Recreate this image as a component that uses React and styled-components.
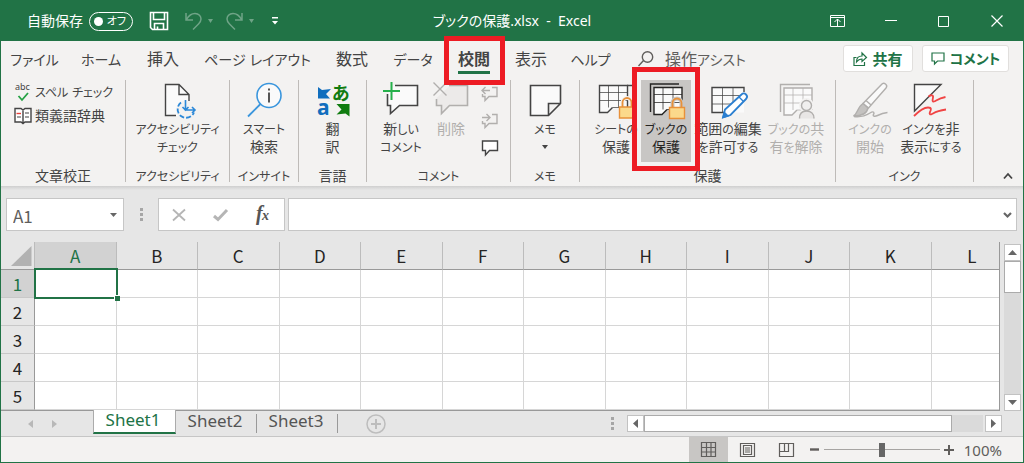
import React from "react";
import styled, { createGlobalStyle, css } from "styled-components";

const GREEN = "#217346";
const INK = "#444444";
const FAINT = "#b1afad";
const RED = "#ed1c24";

const GlobalStyle = createGlobalStyle`
  *, *::before, *::after { box-sizing: border-box; }
  body { margin: 0; background: #e6e6e6; }
  body, button, input {
    font-family: "Noto Sans", "Noto Sans CJK JP", sans-serif;
    font-feature-settings: "palt";
  }
  button { border: 0; padding: 0; background: none; color: inherit; font-size: inherit; line-height: inherit; }
  svg { display: block; flex: none; }
`;

const Window = styled.div`
  --kana: 12px;
  display: flex;
  flex-direction: column;
  min-height: 100vh;
  border: 1px solid ${GREEN};
  background: #e6e6e6;
  color: ${INK};
  overflow: hidden;
`;

const KanaRun = styled.span`
  font-size: var(--kana);
  line-height: 1;
`;

/* Title bar */
const TitleBar = styled.header`
  display: grid;
  grid-template-columns: 1fr auto 1fr;
  align-items: center;
  height: 40px;
  background: ${GREEN};
  color: #fff;
  font-size: 14px;
  line-height: 20px;
`;
const QuickAccess = styled.div`
  display: flex;
  align-items: center;
  padding-left: 26px;
`;
const Switch = styled.label`
  display: flex;
  align-items: center;
  gap: 6px;
`;
const SwitchTrack = styled.span`
  position: relative;
  display: flex;
  align-items: center;
  justify-content: flex-end;
  width: 44px;
  height: 19px;
  padding-right: 6px;
  border: 1px solid #fff;
  border-radius: 10px;
  font-size: 11px;
  line-height: 16px;
`;
const SwitchInput = styled.input`
  position: absolute;
  left: 4px;
  top: 4px;
  width: 9px;
  height: 9px;
  margin: 0;
  appearance: none;
  border-radius: 50%;
  background: #fff;
`;
const QuickButton = styled.button`
  display: flex;
  align-items: center;
  justify-content: space-between;
  width: ${(p) => p.$w}px;
  height: 24px;
  margin-left: ${(p) => p.$gap}px;
  opacity: ${(p) => (p.disabled ? 0.35 : 1)};
`;
const WindowTitle = styled.h1`
  margin: 0;
  font-size: 14px;
  font-weight: 400;
  white-space: pre;
`;
const WindowButtons = styled.div`
  display: flex;
  justify-content: flex-end;
`;
const WindowButton = styled.button`
  display: grid;
  place-items: center;
  width: 53px;
  height: 40px;
`;

/* Tab strip */
const TabStrip = styled.nav`
  --kana: 14px;
  display: flex;
  align-items: center;
  height: 35px;
  background: #f3f2f1;
  font-size: 16px;
  line-height: 24px;
  white-space: nowrap;
`;
const outlined = css`
  &::after {
    content: "";
    position: absolute;
    inset: ${(p) => p.$inset};
    z-index: 2;
    border: 5px solid ${RED};
    pointer-events: none;
  }
`;
const Tab = styled.button`
  position: relative;
  width: ${(p) => p.$w}px;
  height: 35px;
  ${(p) =>
    p.$active &&
    css`
      font-weight: 700;
      &::before {
        content: "";
        position: absolute;
        left: 13px;
        right: 13px;
        bottom: 2px;
        height: 3px;
        background: ${GREEN};
      }
      ${outlined}
    `}
`;
const Tell = styled.button`
  display: flex;
  align-items: center;
  gap: 11px;
  margin-left: 16px;
  color: #605e5c;
`;
const TabActions = styled.div`
  --kana: 14px;
  display: flex;
  gap: 9px;
  margin-left: auto;
  padding-right: 14px;
`;
const ActionButton = styled.button`
  display: flex;
  align-items: center;
  justify-content: center;
  gap: 5px;
  width: ${(p) => p.$w}px;
  height: 27px;
  border: 1px solid #e1dfdd;
  border-radius: 3px;
  background: #fff;
  color: ${GREEN};
  font-size: 15px;
  font-weight: 700;
`;

/* Ribbon */
const Ribbon = styled.section`
  display: flex;
  height: 110px;
  padding: 4px 0;
  background: #f3f2f1;
  font-size: 14px;
  line-height: 18px;
`;
const Shade = styled.div`
  height: 4px;
  background: linear-gradient(#cfcfcf, #e6e6e6);
`;
const Group = styled.div`
  display: flex;
  flex-direction: column;
  justify-content: space-between;
  width: ${(p) => p.$w}px;
  border-right: 1px solid #bebbb8;
`;
const GroupItems = styled.div`
  display: flex;
  justify-content: ${(p) => (p.$start ? "flex-start" : "center")};
  padding: 0 0 0 ${(p) => p.$start || 0}px;
`;
const GroupLabel = styled.div`
  height: 14px;
  line-height: 16px;
  text-align: center;
  white-space: nowrap;
`;
const Large = styled.button`
  position: relative;
  display: flex;
  flex-direction: column;
  align-items: center;
  flex: none;
  width: ${(p) => p.$w}px;
  height: 82px;
  padding-top: 2px;
  color: ${(p) => (p.disabled ? FAINT : INK)};
  white-space: pre;
  ${(p) =>
    p.$active &&
    css`
      background: #c8c6c4;
      color: #252423;
      ${outlined}
    `}
`;
const LargeText = styled.span`
  display: flex;
  flex-direction: column;
  align-items: center;
  width: max-content;
`;
const LargeLine = styled.span`
  height: 18px;
`;
const SmallColumn = styled.div`
  display: flex;
  flex-direction: column;
  padding-left: ${(p) => p.$pad}px;
`;
const Small = styled.button`
  display: flex;
  align-items: center;
  gap: 3px;
  height: ${(p) => p.$h}px;
  color: ${(p) => (p.disabled ? FAINT : INK)};
  white-space: nowrap;
`;
const MenuMark = styled.span`
  padding-top: 7px;
`;
const Collapse = styled.button`
  display: flex;
  align-items: flex-end;
  justify-content: flex-end;
  flex: 1;
  padding: 0 10px 3px 0;
`;

/* Formula bar */
const FormulaBar = styled.div`
  display: flex;
  height: 52px;
  padding: 8px 6px 11px 5px;
`;
const Box = styled.div`
  display: flex;
  align-items: center;
  border: 1px solid #c6c6c6;
  background: #fff;
  color: #666;
`;
const NameBox = styled(Box)`
  width: 118px;
  padding-right: 6px;
`;
const Field = styled.input`
  flex: 1;
  min-width: 0;
  height: 31px;
  padding: 1px 6px 0;
  border: 0;
  outline: 0;
  background: transparent;
  color: #605e5c;
  font-family: "Noto Sans CJK JP", sans-serif;
  font-size: 17px;
`;
const Grip = styled.div`
  display: grid;
  place-items: center;
  width: 34px;
`;
const FormulaButtons = styled(Box)`
  justify-content: space-around;
  width: 127px;
  margin-right: 3px;
`;
const FormulaBox = styled(Box)`
  flex: 1;
  padding-right: 4px;
`;

/* Worksheet */
const Sheet = styled.main`
  display: flex;
  flex: 1;
`;
const Viewport = styled.div`
  flex: 1;
  min-width: 0;
  overflow: hidden;
  border-right: 1px solid #999;
  border-bottom: 1px solid #999;
  background: linear-gradient(#e6e6e6 28px, #fff 28px);
`;
const Table = styled.table`
  width: calc(100% + 14px);
  table-layout: fixed;
  border-collapse: separate;
  border-spacing: 0;
  font-family: "Noto Sans CJK JP", sans-serif;
  font-size: 17px;
  line-height: 24px;
`;
const HeadCell = styled.th`
  height: 28px;
  padding: 0;
  font-weight: 400;
  color: ${(p) => (p.$active ? GREEN : "#252423")};
  background: ${(p) => (p.$active ? "#d2d2d2" : "#e6e6e6")};
  border-right: 1px solid ${(p) => (p.$side ? "#999" : "#bcbcbc")};
  border-bottom: 1px solid ${(p) => (p.$side ? "#c8c8c8" : "#999")};
`;
const Corner = styled.td`
  width: 34px;
  height: 28px;
  padding: 0 2px 0 10px;
  border-right: 1px solid #bcbcbc;
  border-bottom: 1px solid #999;
  background: #e6e6e6;
`;
const Cell = styled.td`
  position: relative;
  height: 28px;
  padding: 0;
  border-right: 1px solid #d6d6d6;
  border-bottom: 1px solid #d6d6d6;
  ${(p) =>
    p.$active &&
    css`
      z-index: 1;
      &::before {
        content: "";
        position: absolute;
        inset: -2px -2px -2px -1px;
        border: 2px solid ${GREEN};
      }
      &::after {
        content: "";
        position: absolute;
        right: -4px;
        bottom: -4px;
        width: 6px;
        height: 6px;
        border: 1px solid #fff;
        border-width: 1px 0 0 1px;
        background: ${GREEN};
      }
    `}
`;
const VScroll = styled.div`
  display: flex;
  flex-direction: column;
  width: 17px;
  margin: 2px 2px 0 4px;
  background: #dadada;
`;
const ScrollButton = styled.button`
  display: grid;
  place-items: center;
  flex: none;
  width: 17px;
  height: 17px;
  border: 1px solid #c2c2c2;
  background: #fff;
  color: #666;
`;
const VThumb = styled.div`
  height: 32px;
  margin-bottom: auto;
  border: 1px solid #ababab;
  background: #fff;
`;

/* Sheet tabs */
const SheetBar = styled.div`
  display: flex;
  height: 26px;
  border-bottom: 1px solid #c6c6c6;
`;
const SheetNav = styled.div`
  display: flex;
  align-items: center;
  justify-content: space-between;
  width: 92px;
  padding: 0 34px 0 25px;
  color: #b8b8b8;
`;
const SheetTab = styled.button`
  position: relative;
  width: 81px;
  height: 22px;
  padding: 0 3px 2px 0;
  color: #555;
  font-size: 17px;
  line-height: 18px;
  ${(p) =>
    p.$active
      ? css`
          width: 83px;
          height: 24px;
          margin-top: -1px;
          background: #fff;
          color: ${GREEN};
          border: 1px solid #ababab;
          border-width: 0 1px 2px;
          border-bottom-color: ${GREEN};
        `
      : css`
          &::after {
            content: "";
            position: absolute;
            right: 0;
            top: 3px;
            bottom: 0;
            width: 1px;
            background: #999;
          }
        `}
`;
const AddSheet = styled.button`
  margin-left: 28px;
  padding-top: 1px;
`;
const HScroll = styled.div`
  display: flex;
  align-items: center;
  width: 391px;
  margin: 0 21px 0 auto;
`;
const HTrack = styled.div`
  flex: 1;
  height: 17px;
  margin-right: 2px;
  background: #dadada;
`;
const HThumb = styled.div`
  width: 91%;
  height: 17px;
  border: 1px solid #ababab;
  background: #fff;
`;
const LeftButton = styled(ScrollButton)`
  margin-left: 13px;
`;

/* Status bar */
const StatusBar = styled.footer`
  display: flex;
  align-items: center;
  justify-content: flex-end;
  height: 25px;
  padding-right: 21px;
  background: #f3f2f1;
  font-size: 15px;
  line-height: 20px;
  color: #605e5c;
`;
const ViewButton = styled.button`
  display: grid;
  place-items: center;
  width: 39px;
  height: 25px;
  background: ${(p) => (p.$active ? "#c8c6c4" : "transparent")};
`;
const ZoomButton = styled.button`
  display: grid;
  place-items: center;
  width: 18px;
  height: 20px;
`;
const Slider = styled.input`
  width: 116px;
  height: 14px;
  margin: 0;
  appearance: none;
  background: linear-gradient(#a6a4a2, #a6a4a2) center / 100% 1px no-repeat;
  &::-webkit-slider-thumb {
    appearance: none;
    width: 6px;
    height: 14px;
    background: #666;
  }
`;
const ZoomValue = styled.button`
  margin-left: 6px;
`;

/* Sets kana a step smaller than the kanji beside it, as in a narrow UI face. */
const Label = ({ children }) =>
  children
    .split(/([\u3041-\u3096\u30a1-\u30fc]+)/)
    .filter(Boolean)
    .map((run, i) => (/[\u3041-\u30fc]/.test(run) ? <KanaRun key={i}>{run}</KanaRun> : run));

const Svg = ({ w = 40, h = 38, children, ...rest }) => (
  <svg width={w} height={h} viewBox={`0 0 ${w} ${h}`} fill="none" stroke="currentColor" strokeWidth="1.4" overflow="visible" aria-hidden="true" {...rest}>
    {children}
  </svg>
);

const Caret = ({ size = 7 }) => (
  <Svg w={size} h={4}>
    <path d={`M0 0H${size}L${size / 2} 4z`} fill="currentColor" stroke="none" />
  </Svg>
);

const Triangle = ({ dir, size = 9 }) => {
  const turn = { up: 0, right: 90, down: 180, left: 270 }[dir];
  return (
    <Svg w={size} h={size} stroke="none">
      <path d={`M${size / 2} 2L${size} 7H0z`} fill="currentColor" transform={`rotate(${turn} ${size / 2} ${size / 2})`} />
    </Svg>
  );
};

const Dots = () => (
  <Svg w={3} h={13} stroke="none" fill="#a6a6a6">
    <path d="M0 0h3v3H0zM0 5h3v3H0zM0 10h3v3H0z" />
  </Svg>
);

const UndoIcon = (props) => (
  <Svg w={17} h={18} strokeWidth="1.5" {...props}>
    <path d="M1 1v7h7M1.500 7.500C4 3 7 1.500 10 1.500c4 0 6 3 6 5.500 0 2-1 3.500-2.500 5L8 17.500" />
  </Svg>
);

const Lock = ({ x, y, back = "#f3f2f1" }) => (
  <g stroke="#e8913a">
    <path d={`M${x + 3} ${y}v-4.500a4.500 4.500 0 0 1 9 0V${y}`} stroke={back} strokeWidth="4" />
    <path d={`M${x + 3} ${y}v-4.500a4.500 4.500 0 0 1 9 0V${y}`} strokeWidth="1.8" />
    <path d={`M${x} ${y}h15v11h-15z`} fill="#fbd98b" />
  </g>
);

const Grid = ({ x, y }) => (
  <g>
    <path d={`M${x} ${y}h28v22h-15l-4 5h-9z`} fill="#fafafa" stroke="none" />
    <path d={`M${x} ${y + 7}h28M${x} ${y + 15}h28M${x + 9} ${y}v22M${x + 19} ${y}v22M${x + 13} ${y + 22}h15`} strokeWidth="1" opacity="0.75" />
    <path d={`M${x + 28} ${y + 22}V${y}H${x}v27h8l5-5`} />
  </g>
);

const PageIcon = () => (
  <Svg>
    <path d="M7.500 2.500H21L31 12.500V34H7.500z" fill="#fafafa" stroke="none" />
    <path d="M18 33.500H7.500v-31H21L31 12.500V19M21 2.500v10h10" />
    <circle cx="27.500" cy="28" r="9.500" fill="#f3f2f1" stroke="none" />
    <path d="M23 20.500a8.500 8.500 0 1 0 13 10" stroke="#2b88d8" strokeWidth="1.8" strokeDasharray="5 2" />
    <path d="M27.500 18v10H37M24.500 25l3 3 3-3M34 25l3 3-3 3" stroke="#2b88d8" strokeWidth="1.600" />
  </Svg>
);
const SmartIcon = () => (
  <Svg>
    <circle cx="25" cy="13.500" r="12" fill="#fafafa" stroke="#3a96dd" strokeWidth="1.600" />
    <path d="M16.500 22L4 34.500" stroke="#3a96dd" strokeWidth="1.800" />
    <path d="M25 10.500v10M25 6.500v2" strokeWidth="1.800" />
  </Svg>
);
const TranslateIcon = () => (
  <Svg stroke="none">
    <path d="M5 5l4 3 9-1-5 5 4 4.500H5z" fill="#106ebe" />
    <text x="4" y="33" fontSize="21" fontWeight="700" fill="#106ebe">a</text>
    <text x="19" y="18" fontSize="18" fontWeight="700" fill="#107c10">あ</text>
    <path d="M36.500 22v12.500l-4-3-9 1 5-5-5-5.500z" fill="#107c10" />
  </Svg>
);
const NewCommentIcon = () => (
  <Svg>
    <path d="M13 3.500h23.500v20h-18l-9 8v-8h-3V12z" fill="#fafafa" stroke="none" />
    <path d="M14 3.500h22.500v20h-18l-9 8v-8h-3V12" strokeWidth="1.600" />
    <path d="M10.500 0v18M2 9h17" stroke="#25b04b" strokeWidth="2" />
  </Svg>
);
const DeleteCommentIcon = () => (
  <Svg>
    <path d="M19 3.500h17.500v20h-18l-8 8v-8h-5V16z" fill="#eceae9" stroke="none" />
    <path d="M18 3.500h18.500v20h-18l-8 8v-8h-5V17" strokeWidth="1.600" />
    <path d="M2.500 0.500l13 13M15.500 0.500l-13 13" />
  </Svg>
);
const MiniComment = ({ arrow }) => (
  <Svg w={18} h={16}>
    {arrow ? <path d="M11 1.500h5v9H8L4 14.500v-4H1.500V8" /> : <path d="M1.500 1h15v9.500H8.500L4.500 15v-4.500h-3z" fill="#fff" />}
    {arrow === "left" && <path d="M1 4.500h8M4.500 1L1 4.500 4.500 8" />}
    {arrow === "right" && <path d="M1 4.500h8M5.500 1L9 4.500 5.500 8" />}
  </Svg>
);
const NoteIcon = () => (
  <Svg>
    <path d="M5.500 3.500h30v18l-12 12h-18zM35.500 21.500h-12v12" fill="#fafafa" strokeWidth="1.600" />
  </Svg>
);
const SheetLockIcon = () => (
  <Svg>
    <Grid x={3.5} y={3.5} />
    <path d="M31 3.500h7v8" />
    <Lock x={23.5} y={25} />
  </Svg>
);
const BookLockIcon = () => (
  <Svg>
    <path d="M4.500 30V2H33" />
    <Grid x={8} y={5.5} />
    <Lock x={23.5} y={25.5} back="#c8c6c4" />
  </Svg>
);
const RangeIcon = () => (
  <Svg>
    <path d="M4 5.500h32v25H4z" fill="#fafafa" stroke="none" />
    <path d="M4 13.500h28M4 22h20M14.500 5.500v25M25 5.500v15" strokeWidth="1" opacity="0.75" />
    <path d="M36 10V5.500H4v25h12" />
    <path d="M15 35.500l2-8L33.500 12.500a3 3 0 0 1 4.500 4.500L22.500 33z" fill="#fff" stroke="#2b7fd0" strokeWidth="1.800" />
    <path d="M15 35.500l1.500-5 3.500 3.500zM31 15l4.500 4.500" fill="#2b7fd0" stroke="#2b7fd0" />
  </Svg>
);
const UnshareIcon = () => (
  <Svg>
    <path d="M4.500 30V2.500H34" />
    <Grid x={8} y={6} />
    <path d="M23 37.500c0-5 3-8 7.500-8s8 3 8 8z" fill="#e8e6e5" stroke="#f3f2f1" strokeWidth="4" />
    <circle cx="30.500" cy="23.500" r="5.500" fill="#e8e6e5" stroke="#f3f2f1" strokeWidth="4" />
    <path d="M23.500 36.500c0-5 3-7.500 7-7.500s7.500 2.500 7.500 7.500" fill="#e8e6e5" />
    <circle cx="30.500" cy="23.500" r="5" fill="#f0efee" />
  </Svg>
);
const InkPenIcon = () => (
  <Svg>
    <path d="M13 21.500L31.500 2.500a2.800 2.800 0 0 1 4.500 3.500L18.500 26z" fill="#fafafa" />
    <path d="M16 18.500l5 4.500" />
    <path d="M13 21.500l5 4.500c-1 5-6 8-14.500 8 4-2 4-9 9.500-12.500z" fill="#c4c2c0" />
    <path d="M4 34.500c7 1 12-1 16-3.500 4-2.500 4.500 0 3.500 1.500s1 2.500 4 1 5-2.500 10-3" />
  </Svg>
);
const InkHideIcon = () => (
  <Svg>
    <path d="M3.500 2.500H30L3.500 29z" fill="#fafafa" />
    <path d="M17.500 14.500c3-2 5-1.500 4.500 1s-1 4.500 1 4 4-3 11.500-4.500" stroke="#f04444" strokeWidth="1.800" />
    <path d="M3 34c5-5 9-8.500 14-8.500 4 0 3 2.500 2 4.500s0 3 2 2 4-3 14-4.500" stroke="#f04444" strokeWidth="1.800" />
  </Svg>
);

const LargeButton = ({ icon, lines, children, ...rest }) => (
  <Large type="button" {...rest}>
    {icon}
    <LargeText>
      {lines.map((line) => (
        <LargeLine key={line}>
          <Label>{line}</Label>
        </LargeLine>
      ))}
      {children}
    </LargeText>
  </Large>
);

const tabs = [
  ["ファイル", 67],
  ["ホーム", 66],
  ["挿入", 58],
  ["ページ レイアウト", 131],
  ["数式", 58],
  ["データ", 64],
  ["校閲", 58],
  ["表示", 56],
  ["ヘルプ", 63],
];
const columns = "ABCDEFGHIJKL".split("");
const rows = [1, 2, 3, 4, 5];

export default function App() {
  return (
    <Window>
      <GlobalStyle />
      <TitleBar>
        <QuickAccess>
          <Switch>
            自動保存
            <SwitchTrack>
              <SwitchInput type="checkbox" role="switch" />
              オフ
            </SwitchTrack>
          </Switch>
          <QuickButton type="button" aria-label="上書き保存" $w={20} $gap={16}>
            <Svg w={20} h={20} strokeWidth="1.600">
              <path d="M1.500 1.500h17v17h-15l-2-2zM4.500 1.500v7h11v-7M5.500 18.500v-6h9v6M8.500 18.500v-3" />
            </Svg>
          </QuickButton>
          <QuickButton type="button" aria-label="元に戻す" disabled $w={28} $gap={16}>
            <UndoIcon />
            <Caret size={5} />
          </QuickButton>
          <QuickButton type="button" aria-label="やり直し" disabled $w={28} $gap={13}>
            <UndoIcon transform="scale(-1 1)" />
            <Caret size={5} />
          </QuickButton>
          <QuickButton type="button" aria-label="クイック アクセスの設定" $w={6} $gap={18}>
            <Svg w={6} h={8} stroke="none" fill="currentColor">
              <path d="M0 0h6v1.500H0zM0 4h6L3 7.500z" />
            </Svg>
          </QuickButton>
        </QuickAccess>
        <WindowTitle>{"ブックの保護.xlsx  -  Excel"}</WindowTitle>
        <WindowButtons>
          <WindowButton type="button" aria-label="リボンの表示オプション">
            <Svg w={15} h={12} strokeWidth="1">
              <path d="M0.500 0.500h14v11h-14zM0.500 2.500h14M7.500 11V4M4.500 7l3-3 3 3" />
            </Svg>
          </WindowButton>
          <WindowButton type="button" aria-label="最小化">
            <Svg w={12} h={2} strokeWidth="1"><path d="M0 0.500h12" /></Svg>
          </WindowButton>
          <WindowButton type="button" aria-label="最大化">
            <Svg w={11} h={11} strokeWidth="1"><path d="M0.500 0.500h10v10h-10z" /></Svg>
          </WindowButton>
          <WindowButton type="button" aria-label="閉じる">
            <Svg w={12} h={12} strokeWidth="1.200"><path d="M0.500 0.500l11 11M11.500 0.500l-11 11" /></Svg>
          </WindowButton>
        </WindowButtons>
      </TitleBar>

      <TabStrip>
        {tabs.map(([name, w]) => (
          <Tab key={name} type="button" $w={w} $active={name === "校閲"} $inset="-5px -2px -9px -1px">
            <Label>{name}</Label>
          </Tab>
        ))}
        <Tell type="button">
          <Svg w={16} h={16}>
            <circle cx="9.500" cy="6" r="5.200" />
            <path d="M5.500 9.500L0.500 15" />
          </Svg>
          <span><Label>操作アシスト</Label></span>
        </Tell>
        <TabActions>
          <ActionButton type="button" $w={70}>
            <Svg w={14} h={14} strokeWidth="1.200">
              <path d="M3.500 5.500H1v8h10.500V10M3.500 10c0-4 2-6 5.500-6V1l4.500 4.500L9 9.500V7C6.500 7 5 8 3.500 10z" />
            </Svg>
            共有
          </ActionButton>
          <ActionButton type="button" $w={87}>
            <Svg w={14} h={13} strokeWidth="1.200">
              <path d="M1 1h12v8H6.500L3.500 12V9H1z" />
            </Svg>
            <Label>コメント</Label>
          </ActionButton>
        </TabActions>
      </TabStrip>

      <Ribbon>
        <Group $w={125}>
          <GroupItems $start={4}>
            <SmallColumn $pad={9}>
              <Small type="button" $h={24}>
                <Svg w={18} h={20}>
                  <text x="1" y="8" fontSize="9" fill="currentColor" stroke="none">abc</text>
                  <path d="M4.500 14l3.500 4 6-7" stroke="#25a244" strokeWidth="1.800" />
                </Svg>
                <span><Label>スペル チェック</Label></span>
              </Small>
              <Small type="button" $h={24}>
                <Svg w={18} h={18}>
                  <path d="M9 2.500V17M1 1.500h6l2 1.500 2-1.500h6V15H11l-2 1.500L7 15H1z" fill="#fff" />
                  <path d="M3 10h4M11 6h4M11 10h4" strokeWidth="1.200" />
                  <path d="M2.500 6.500h4.500" stroke="#e8403a" />
                </Svg>
                類義語辞典
              </Small>
            </SmallColumn>
          </GroupItems>
          <GroupLabel>文章校正</GroupLabel>
        </Group>
        <Group $w={104}>
          <GroupItems>
            <LargeButton $w={90} icon={<PageIcon />} lines={["アクセシビリティ", "チェック"]} />
          </GroupItems>
          <GroupLabel><Label>アクセシビリティ</Label></GroupLabel>
        </Group>
        <Group $w={69}>
          <GroupItems>
            <LargeButton $w={60} icon={<SmartIcon />} lines={["スマート", "検索"]} />
          </GroupItems>
          <GroupLabel><Label>インサイト</Label></GroupLabel>
        </Group>
        <Group $w={68}>
          <GroupItems>
            <LargeButton $w={50} icon={<TranslateIcon />} lines={["翻", "訳"]} />
          </GroupItems>
          <GroupLabel>言語</GroupLabel>
        </Group>
        <Group $w={144}>
          <GroupItems $start={4}>
            <LargeButton $w={60} icon={<NewCommentIcon />} lines={["新しい", "コメント"]} />
            <LargeButton $w={40} disabled icon={<DeleteCommentIcon />} lines={["削除"]} />
            <SmallColumn $pad={10}>
              <Small type="button" aria-label="前のコメント" disabled $h={27}><MiniComment arrow="left" /></Small>
              <Small type="button" aria-label="次のコメント" disabled $h={27}><MiniComment arrow="right" /></Small>
              <Small type="button" aria-label="コメントの表示" $h={27}><MiniComment /></Small>
            </SmallColumn>
          </GroupItems>
          <GroupLabel><Label>コメント</Label></GroupLabel>
        </Group>
        <Group $w={69}>
          <GroupItems>
            <LargeButton $w={50} icon={<NoteIcon />} lines={["メモ"]}>
              <MenuMark><Caret size={6} /></MenuMark>
            </LargeButton>
          </GroupItems>
          <GroupLabel><Label>メモ</Label></GroupLabel>
        </Group>
        <Group $w={256}>
          <GroupItems $start={11}>
            <LargeButton $w={50} icon={<SheetLockIcon />} lines={["シートの", "保護"]} />
            <LargeButton $w={50} $active $inset="-13px -9px -9px -9px" icon={<BookLockIcon />} lines={["ブックの", "保護"]} />
            <LargeButton $w={74} icon={<RangeIcon />} lines={["範囲の編集", "を許可する"]} />
            <LargeButton $w={62} disabled icon={<UnshareIcon />} lines={["ブックの共", "有を解除"]} />
          </GroupItems>
          <GroupLabel>保護</GroupLabel>
        </Group>
        <Group $w={138}>
          <GroupItems $start={4}>
            <LargeButton $w={60} disabled icon={<InkPenIcon />} lines={["インクの", "開始"]} />
            <LargeButton $w={62} icon={<InkHideIcon />} lines={["インクを非", "表示にする"]} />
          </GroupItems>
          <GroupLabel><Label>インク</Label></GroupLabel>
        </Group>
        <Collapse type="button" aria-label="リボンを折りたたむ">
          <Svg w={10} h={6} strokeWidth="1.800"><path d="M1 5.500l4-4.500 4 4.500" /></Svg>
        </Collapse>
      </Ribbon>
      <Shade />

      <FormulaBar>
        <NameBox>
          <Field aria-label="名前ボックス" defaultValue="A1" />
          <Caret />
        </NameBox>
        <Grip><Dots /></Grip>
        <FormulaButtons>
          <button type="button" aria-label="キャンセル">
            <Svg w={14} h={12} stroke="#b5b5b5" strokeWidth="1.800"><path d="M1 0.500l12 11M13 0.500l-12 11" /></Svg>
          </button>
          <button type="button" aria-label="入力">
            <Svg w={15} h={12} stroke="#b5b5b5" strokeWidth="3"><path d="M1 7l4 3.500L14 1" /></Svg>
          </button>
          <button type="button" aria-label="関数の挿入">
            <Svg w={16} h={20} stroke="none" fill="#555">
              <text x="1" y="15" fontFamily="Liberation Serif, serif" fontStyle="italic" fontWeight="700" fontSize="20">f</text>
              <text x="7" y="15" fontFamily="Liberation Serif, serif" fontStyle="italic" fontWeight="700" fontSize="14">x</text>
            </Svg>
          </button>
        </FormulaButtons>
        <FormulaBox>
          <Field aria-label="数式バー" />
          <Svg w={9} h={6} stroke="#666" strokeWidth="2.200"><path d="M1 1l3.500 3.500L8 1" /></Svg>
        </FormulaBox>
      </FormulaBar>

      <Sheet>
        <Viewport>
          <Table>
            <thead>
              <tr>
                <Corner>
                  <Svg w={21} h={20} stroke="none"><path d="M20.500 0v20H0z" fill="#b2b2b2" /></Svg>
                </Corner>
                {columns.map((c) => (
                  <HeadCell key={c} scope="col" $active={c === "A"}>{c}</HeadCell>
                ))}
              </tr>
            </thead>
            <tbody>
              {rows.map((r) => (
                <tr key={r}>
                  <HeadCell scope="row" $side $active={r === 1}>{r}</HeadCell>
                  {columns.map((c) => (
                    <Cell key={c} $active={r === 1 && c === "A"} />
                  ))}
                </tr>
              ))}
            </tbody>
          </Table>
        </Viewport>
        <VScroll>
          <ScrollButton type="button" aria-label="上へ"><Triangle dir="up" /></ScrollButton>
          <VThumb />
          <ScrollButton type="button" aria-label="下へ"><Triangle dir="down" /></ScrollButton>
        </VScroll>
      </Sheet>

      <SheetBar>
        <SheetNav>
          <Triangle dir="left" size={8} />
          <Triangle dir="right" size={8} />
        </SheetNav>
        <SheetTab type="button" $active>Sheet1</SheetTab>
        <SheetTab type="button">Sheet2</SheetTab>
        <SheetTab type="button">Sheet3</SheetTab>
        <AddSheet type="button" aria-label="新しいシート">
          <Svg w={20} h={20} stroke="#bdbdbd" strokeWidth="1.500">
            <circle cx="10" cy="10" r="9" />
            <path d="M10 5v10M5 10h10" strokeWidth="2" />
          </Svg>
        </AddSheet>
        <HScroll>
          <Dots />
          <LeftButton type="button" aria-label="左へ"><Triangle dir="left" /></LeftButton>
          <HTrack><HThumb /></HTrack>
          <ScrollButton type="button" aria-label="右へ"><Triangle dir="right" /></ScrollButton>
        </HScroll>
      </SheetBar>

      <StatusBar>
        <ViewButton type="button" aria-label="標準" $active>
          <Svg w={15} h={15} strokeWidth="1.200"><path d="M0.500 0.500h14v14h-14zM0.500 5.500h14M0.500 10h14M5.500 0.500v14M10 0.500v14" /></Svg>
        </ViewButton>
        <ViewButton type="button" aria-label="ページ レイアウト">
          <Svg w={15} h={14} strokeWidth="1.200"><path d="M0.500 0.500h14v13h-14zM3.500 2.500h8v9h-8zM5 5h5M5 7h5M5 9h5" /></Svg>
        </ViewButton>
        <ViewButton type="button" aria-label="改ページ プレビュー">
          <Svg w={15} h={14} strokeWidth="1.200"><path d="M0.500 0.500h14v13h-14zM0.500 8.500h9v-8M5.500 0.500v8" /></Svg>
        </ViewButton>
        <ZoomButton type="button" aria-label="縮小">
          <Svg w={9} h={3} strokeWidth="2.400"><path d="M0 1.500h9" /></Svg>
        </ZoomButton>
        <Slider type="range" aria-label="ズーム" min="0" max="100" defaultValue="50" />
        <ZoomButton type="button" aria-label="拡大">
          <Svg w={10} h={10} strokeWidth="2"><path d="M0 5h10M5 0v10" /></Svg>
        </ZoomButton>
        <ZoomValue type="button">100%</ZoomValue>
      </StatusBar>
    </Window>
  );
}
